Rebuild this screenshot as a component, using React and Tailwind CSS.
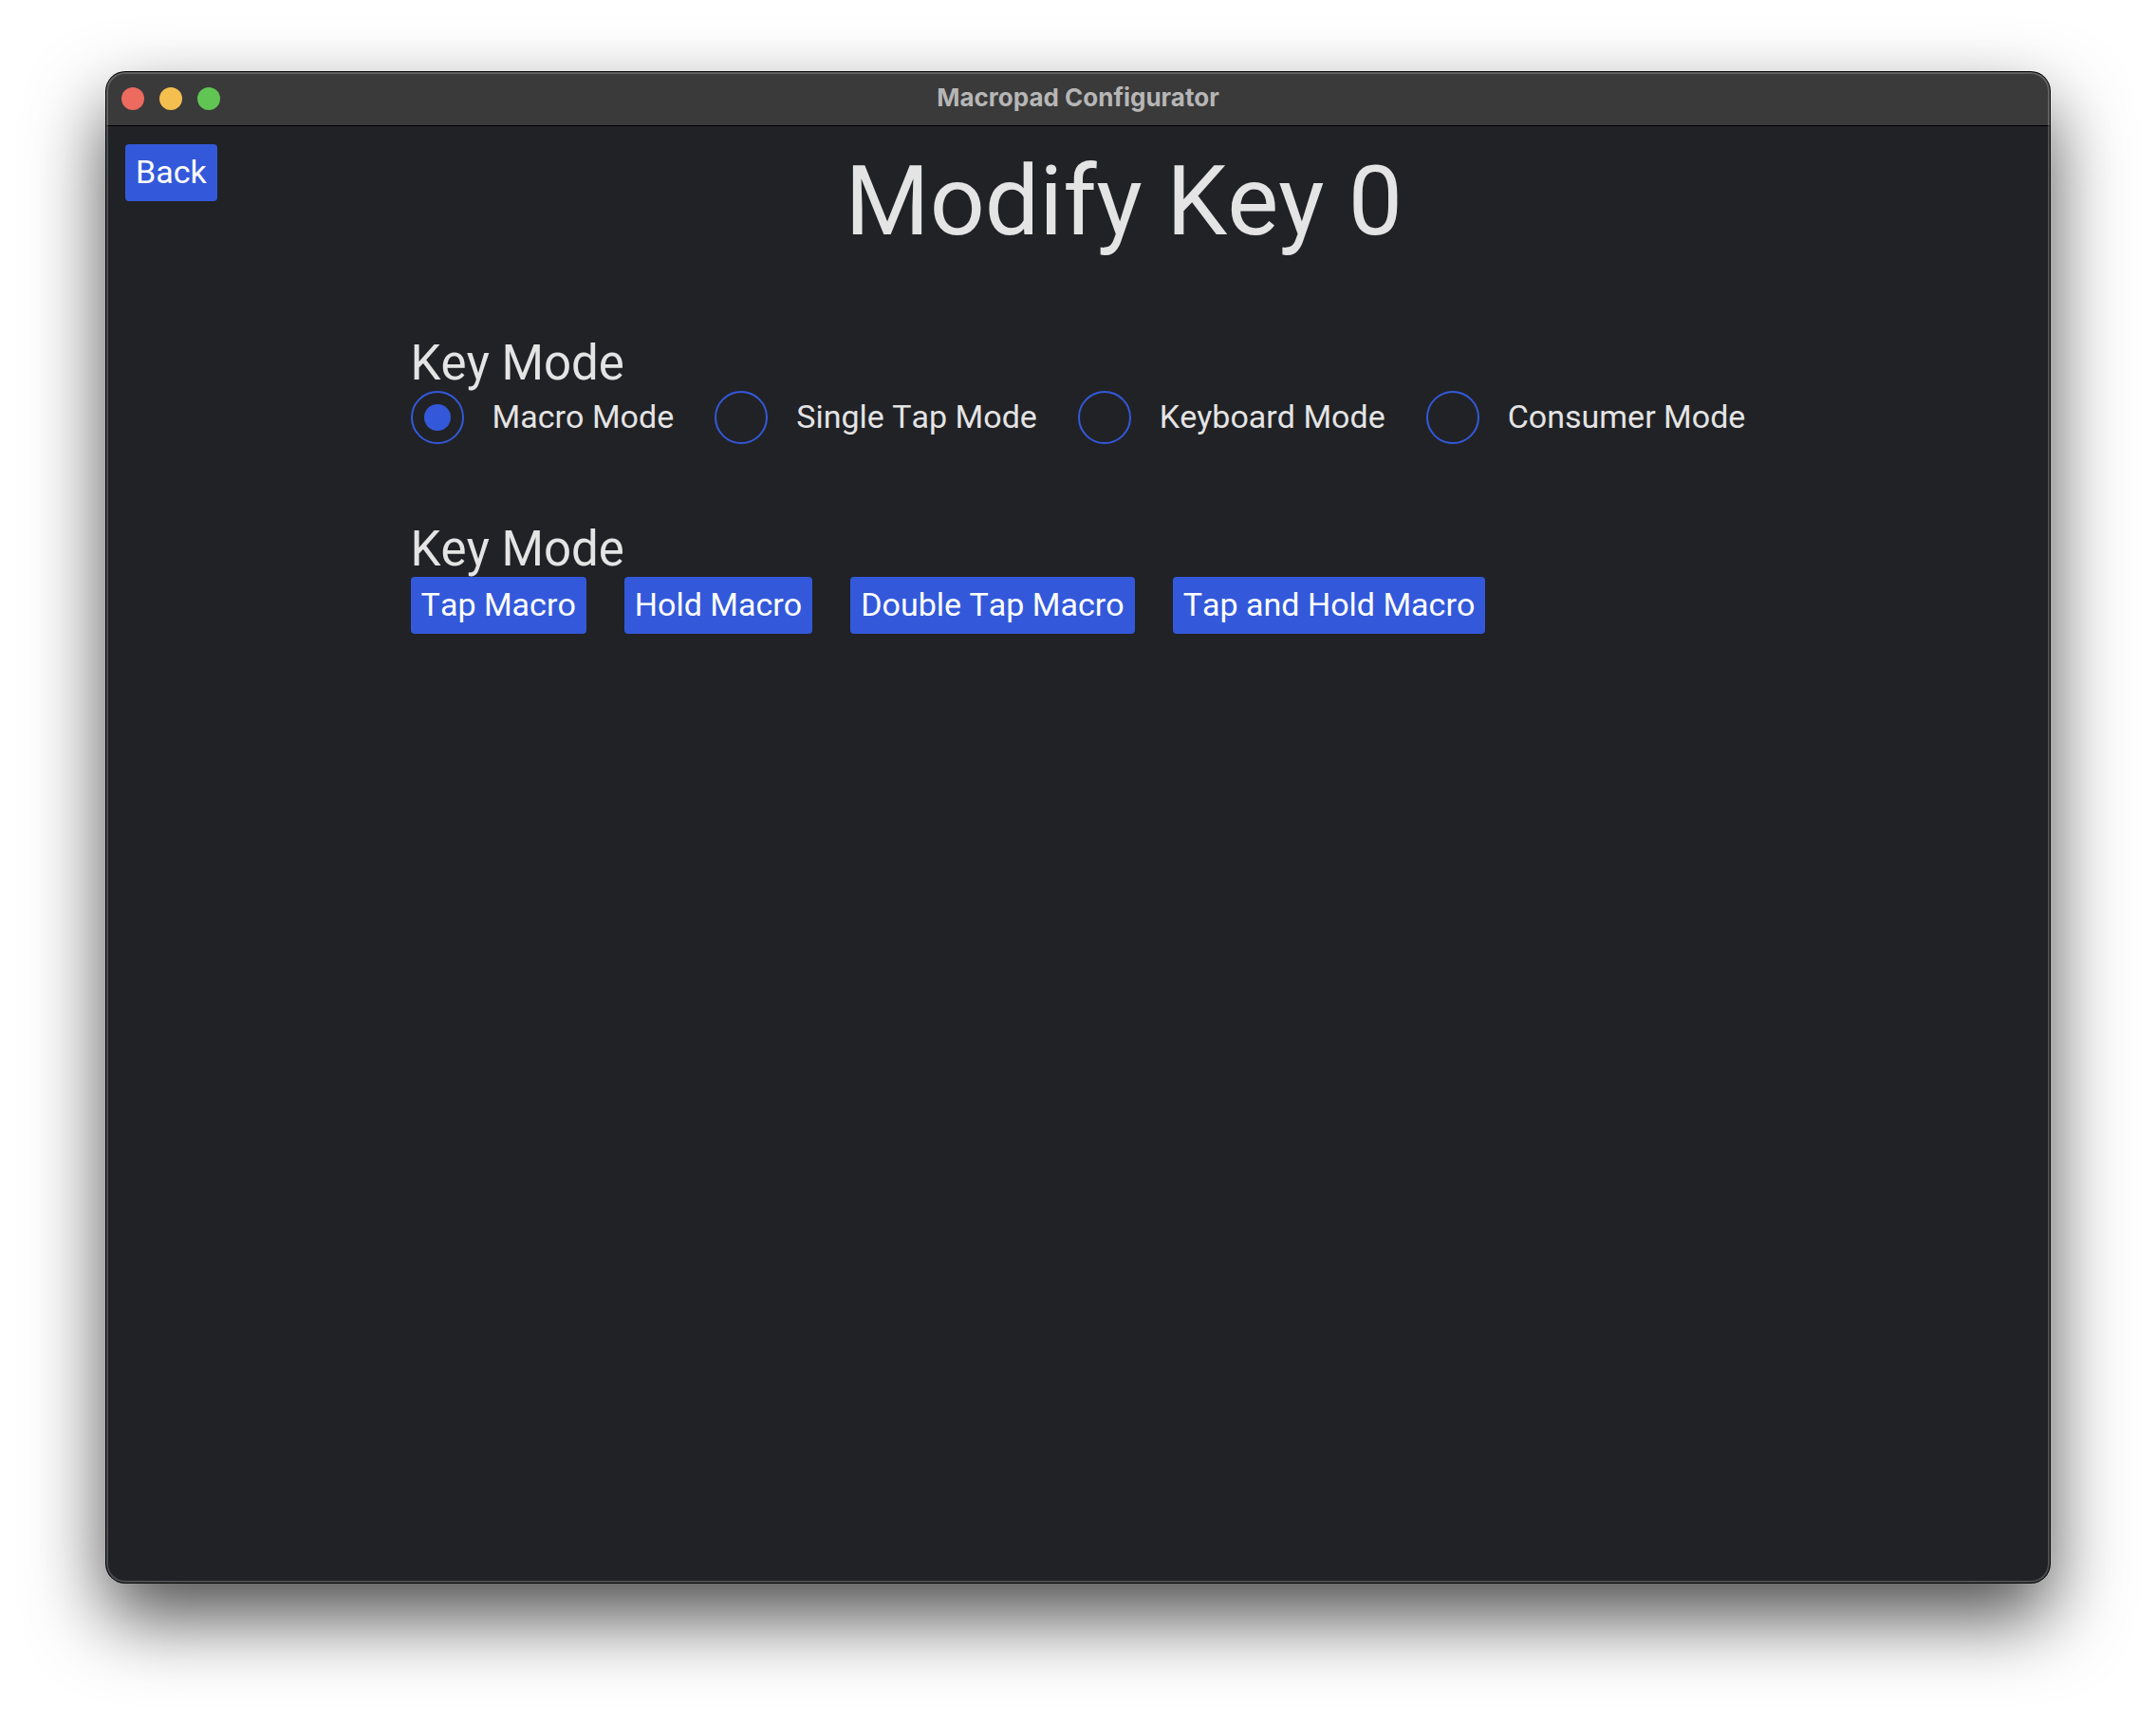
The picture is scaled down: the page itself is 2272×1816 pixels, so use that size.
import { useState } from "react";

const modes = ["Macro Mode", "Single Tap Mode", "Keyboard Mode", "Consumer Mode"];
const macros = ["Tap Macro", "Hold Macro", "Double Tap Macro", "Tap and Hold Macro"];

function Button({ children }) {
  return (
    <button
      type="button"
      className="h-[60px] shrink-0 rounded-[4px] bg-[#3359da] px-[11px] pb-0.5 text-[34px] leading-10 whitespace-nowrap text-white"
    >
      {children}
    </button>
  );
}

function TitleBar() {
  return (
    <header className="grid h-14 grid-cols-[1fr_auto_1fr] items-center bg-[#3a3a3a] px-4">
      <div className="flex gap-4">
        <button type="button" aria-label="Close" className="size-6 rounded-full bg-[#ec6a5e]" />
        <button type="button" aria-label="Minimize" className="size-6 rounded-full bg-[#f4bf4f]" />
        <button type="button" aria-label="Zoom" className="size-6 rounded-full bg-[#61c554]" />
      </div>
      <div className="pb-0.5 font-['Inter',sans-serif] text-[26px] leading-8 font-bold text-[#b6b6b6]">
        Macropad Configurator
      </div>
    </header>
  );
}

export default function App() {
  const [mode, setMode] = useState(modes[0]);

  return (
    <div className="flex min-h-screen bg-white px-28 pt-[76px] pb-[148px] font-['Roboto',sans-serif]">
      <div className="relative flex flex-1 flex-col overflow-hidden rounded-[20px] bg-[#212226] text-[#e4e4e4] shadow-[0_0_0_1px_#000,0_36px_80px_rgba(0,0,0,0.7)] after:pointer-events-none after:absolute after:inset-0 after:rounded-[20px] after:shadow-[inset_0_0_0_2px_rgba(255,255,255,0.2)]">
        <TitleBar />
        <main className="flex flex-1 flex-col border-t border-black px-5 pt-[19px] [font-kerning:none]">
          <div className="flex items-start">
            <Button>Back</Button>
            <h1 className="flex-1 text-center text-[102px] leading-[120px]">Modify Key 0</h1>
          </div>
          <div className="mt-20 flex flex-col gap-20 self-center">
            <fieldset>
              <legend className="pt-0.5 text-[51px] leading-[58px]">Key Mode</legend>
              <div className="flex gap-[43px]">
                {modes.map((name) => (
                  <label key={name} className="flex items-center gap-[30px] text-[34px] leading-10 whitespace-nowrap">
                    <input
                      type="radio"
                      name="mode"
                      checked={mode === name}
                      onChange={() => setMode(name)}
                      className="grid size-14 shrink-0 appearance-none place-items-center rounded-full border-2 border-[#3359da] before:size-7 before:rounded-full checked:before:bg-[#3359da]"
                    />
                    <span className="pb-0.5">{name}</span>
                  </label>
                ))}
              </div>
            </fieldset>
            <section>
              <h2 className="pt-0.5 text-[51px] leading-[58px]">Key Mode</h2>
              <div className="flex gap-10">
                {macros.map((name) => (
                  <Button key={name}>{name}</Button>
                ))}
              </div>
            </section>
          </div>
        </main>
      </div>
    </div>
  );
}
